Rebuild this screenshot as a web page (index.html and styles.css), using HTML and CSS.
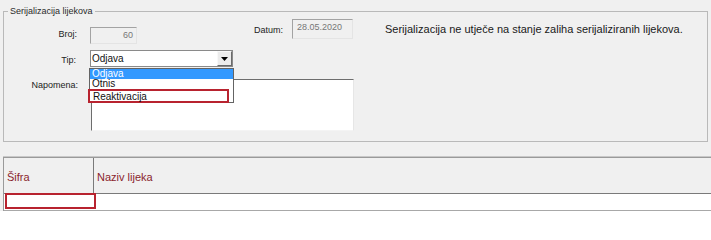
FILE: index.html
```html
<!DOCTYPE html>
<html lang="hr">
<head>
<meta charset="utf-8">
<title>Serijalizacija lijekova</title>
<link rel="stylesheet" href="styles.css">
</head>
<body>
<div class="page">
  <div class="group">
    <div class="legend">Serijalizacija lijekova</div>
    <div class="row row1">
      <div class="lbl lbl-broj">Broj:</div>
      <div class="field field-broj">60</div>
      <div class="lbl lbl-datum">Datum:</div>
      <div class="field field-datum">28.05.2020</div>
      <div class="info">Serijalizacija ne utječe na stanje zaliha serijaliziranih lijekova.</div>
    </div>
    <div class="row row2">
      <div class="lbl lbl-tip">Tip:</div>
      <div class="combo">
        <div class="combo-text">Odjava</div>
        <div class="combo-btn"><svg width="7" height="4" viewBox="0 0 7 4"><path d="M0 0H7L3.5 4Z" fill="#000"/></svg></div>
        <div class="dropdown">
          <div class="opt opt-sel">Odjava</div>
          <div class="opt">Otnis</div>
          <div class="opt opt-focus">Reaktivacija</div>
        </div>
      </div>
    </div>
    <div class="row row3">
      <div class="lbl lbl-nap">Napomena:</div>
      <div class="memo"></div>
    </div>
  </div>
  <div class="grid">
    <div class="grid-head">
      <div class="hcell hcell-sifra">Šifra</div>
      <div class="hcell hcell-naziv">Naziv lijeka</div>
    </div>
    <div class="grid-row">
      <div class="cell-focus"></div>
    </div>
  </div>
  <div class="grid-empty"></div>
</div>
</body>
</html>
```
FILE: styles.css
```css
* { box-sizing: border-box; }
html { background: #fff; }
html, body { margin: 0; padding: 0; }
body {
  width: 711px;
  height: 230px;
  overflow: hidden;
  background: #f0f0f0;
  font-family: "Liberation Sans", Arial, sans-serif;
  color: #1e1e1e;
}
.page {
  display: flex;
  flex-direction: column;
  height: 230px;
}
.group {
  margin: 11px 3px 0 3px;
  height: 131px;
  border: 1px solid #b9b9b9;
}
.legend {
  width: max-content;
  margin: -6px 0 0 4px;
  padding: 0 2px;
  background: #f0f0f0;
  font-size: 9px;
  line-height: 11px;
  color: #2a2a2a;
}
.row {
  display: flex;
  align-items: flex-start;
}
.row1 { margin-top: 2px; height: 20px; }
.row2 { margin-top: 11px; height: 17px; }
.row3 { margin-top: 12px; }
.lbl {
  font-size: 9px;
  line-height: 11px;
  text-align: right;
  color: #222;
}
.lbl-broj { width: 74px; padding-right: 1px; margin-top: 10px; }
.lbl-datum { width: 147px; padding-right: 1px; margin-top: 6px; }
.lbl-tip { width: 74px; padding-right: 2px; margin-top: 5px; }
.lbl-nap { width: 74px; padding-right: 0; margin-top: 1px; }
.field {
  background: #f0f0f0;
  border: 1px solid;
  border-color: #a3a3a3 #e4e4e4 #e4e4e4 #a3a3a3;
  font-size: 9px;
  line-height: 11px;
  color: #777;
}
.field-broj {
  margin-left: 12px;
  margin-top: 8px;
  width: 47px;
  height: 17px;
  text-align: right;
  padding: 2px 3px 0 0;
}
.field-datum {
  margin-left: 8px;
  width: 61px;
  height: 20px;
  padding: 2px 0 0 4px;
}
.info {
  margin-left: 32px;
  margin-top: 4px;
  font-size: 11px;
  line-height: 13px;
  color: #1a1a1a;
  white-space: nowrap;
}
.combo {
  position: relative;
  margin-left: 12px;
  width: 143px;
  height: 17px;
  background: #fff;
  border: 1px solid #8a8a8a;
  display: flex;
}
.combo-text {
  flex: 1;
  font-size: 10px;
  line-height: 15px;
  padding-left: 1px;
  color: #111;
}
.combo-btn {
  width: 15px;
  height: 15px;
  background: #ececec;
  border: 1px solid;
  border-color: #f8f8f8 #6a6a6a #6a6a6a #f8f8f8;
  display: flex;
  align-items: center;
  justify-content: center;
}
.dropdown {
  position: absolute;
  left: -2px;
  top: 17px;
  width: 145px;
  height: 35px;
  background: #fff;
  border: 1px solid #646464;
  z-index: 2;
}
.opt {
  font-size: 10px;
  line-height: 10px;
  height: 10px;
  padding-left: 2px;
  color: #111;
}
.opt-sel {
  background: #3399ff;
  color: #fff;
}
.opt-focus {
  position: relative;
  margin-left: -2px;
  width: 141px;
  height: 14px;
  line-height: 11px;
  padding-left: 3px;
  border: 2px solid #b8232f;
}
.memo {
  margin-left: 13px;
  width: 263px;
  height: 52px;
  background: #fff;
  border: 1px solid;
  border-color: #6d6d6d #e6e6e6 #f4f4f4 #6d6d6d;
}
.grid {
  margin: 15px 0 0 3px;
  border-top: 1px solid #9a9a9a;
  border-left: 1px solid #9a9a9a;
  box-shadow: 0 -1px 0 #c8c8c8;
}
.grid-head {
  display: flex;
  height: 36px;
  background: #f0f0f0;
  border-bottom: 1px solid #7a7a7a;
}
.hcell {
  font-size: 11px;
  line-height: 13px;
  color: #8a1f2d;
  padding: 13px 0 0 3px;
}
.hcell-sifra {
  width: 90px;
  border-right: 1px solid #7a7a7a;
}
.hcell-naziv { flex: 1; }
.grid-row {
  display: flex;
  align-items: flex-start;
  height: 17px;
  background: #fff;
  border-bottom: 1px solid #a8a8a8;
}
.cell-focus {
  margin: -1px 0 0 1px;
  width: 91px;
  height: 16px;
  border: 2px solid #b8232f;
}
.grid-empty {
  flex: 1;
  background: #fff;
}
```
